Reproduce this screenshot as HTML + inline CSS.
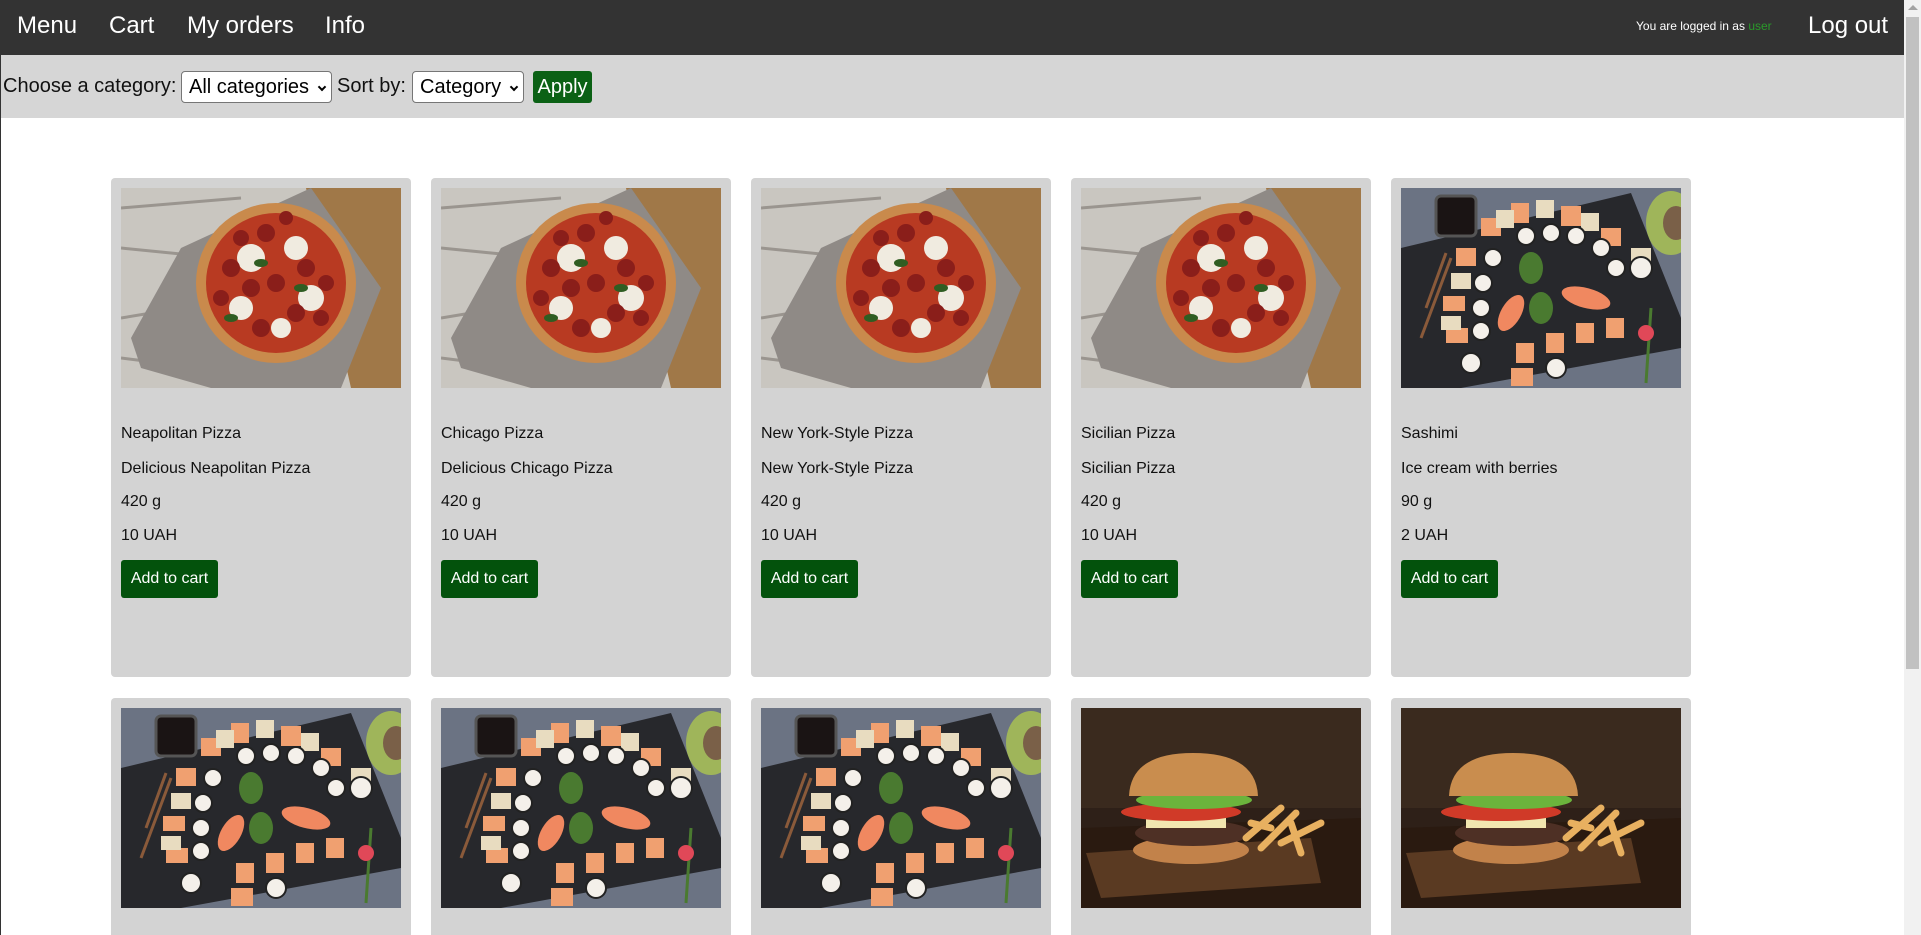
<!DOCTYPE html>
<html><head><meta charset="utf-8"><style>
*{box-sizing:border-box}
html,body{margin:0;padding:0;width:1921px;height:935px;overflow:hidden;background:#fff;font-family:"Liberation Sans",Arial,sans-serif;position:relative}
.nav{position:absolute;left:0;top:0;width:1904px;height:55px;background:#333}
.nav a{position:absolute;top:12px;color:#fff;font-size:24px;text-decoration:none;line-height:28px}
.login{position:absolute;left:1636px;top:19px;color:#fff;font-size:12px}
.login span{color:#2a9a2a}
.filter{position:absolute;left:0;top:55px;width:1904px;height:63px;background:#d6d6d6;border-left:1px solid #333}
.leftline{position:absolute;left:0;top:118px;width:1px;height:817px;background:#333}
.filter .t{position:absolute;top:19px;font-size:20px;color:#111;line-height:24px}
.sel{position:absolute;top:16px;height:32px;background:#fff;border:1px solid #767676;border-radius:4px;font-size:20px;line-height:30px;padding-left:7px;color:#000}
.sel i{position:absolute;right:6px;top:12px;width:6px;height:6px;border-right:2px solid #000;border-bottom:2px solid #000;transform:rotate(45deg)}
.apply{position:absolute;left:532px;top:16px;width:59px;height:32px;background:#0b6115;color:#fff;font-size:20px;border-radius:3px;text-align:center;line-height:32px}
.scroll{position:absolute;left:1904px;top:0;width:17px;height:935px;background:#f1f1f1}
.scroll .th{position:absolute;left:2px;top:17px;width:13px;height:652px;background:#c1c1c1}
.scroll .up{position:absolute;left:4px;top:5px;border-left:5px solid transparent;border-right:5px solid transparent;border-bottom:5px solid #a3a3a3}
.card{position:absolute;width:300px;height:499px;background:#d3d3d3;border-radius:4px}
.card.r2{height:237px;border-radius:4px 4px 0 0}
.card svg{position:absolute;left:10px;top:10px;width:280px;height:200px;display:block}
.card p{position:absolute;left:10px;margin:0;font-size:16px;color:#111;line-height:18px}
.btn{position:absolute;left:10px;top:382px;width:97px;height:38px;background:#03520c;color:#fff;border-radius:3px;font-size:16px;line-height:38px;text-align:center}
</style></head><body>
<svg width="0" height="0" style="position:absolute">
<defs>
<symbol id="pizza" viewBox="0 0 280 200">
<rect width="280" height="200" fill="#c9c6c0"/>
<path d="M0 20 L120 10 M0 60 L100 70 M0 130 L60 120 M0 170 L80 180" stroke="#6d6660" stroke-width="3" opacity=".5"/>
<path d="M185 0 L280 0 L280 200 L230 200 Z" fill="#a07848"/>
<path d="M60 60 L190 0 L260 100 L220 200 L90 200 L20 180 L10 150 Z" fill="#8f8a86"/>
<circle cx="155" cy="95" r="80" fill="#c98a4c"/>
<circle cx="155" cy="95" r="70" fill="#b83a22"/>
<g fill="#f0ebe0"><circle cx="130" cy="70" r="14"/><circle cx="175" cy="60" r="12"/><circle cx="190" cy="110" r="13"/><circle cx="120" cy="120" r="12"/><circle cx="160" cy="140" r="10"/></g>
<g fill="#8a1e1a"><circle cx="110" cy="80" r="9"/><circle cx="145" cy="45" r="9"/><circle cx="185" cy="80" r="9"/><circle cx="155" cy="95" r="9"/><circle cx="130" cy="100" r="9"/><circle cx="175" cy="125" r="9"/><circle cx="140" cy="140" r="9"/><circle cx="205" cy="95" r="8"/><circle cx="100" cy="110" r="8"/><circle cx="120" cy="50" r="8"/><circle cx="200" cy="130" r="8"/><circle cx="165" cy="30" r="7"/></g>
<g fill="#2f5d22"><ellipse cx="140" cy="75" rx="7" ry="4"/><ellipse cx="180" cy="100" rx="7" ry="4"/><ellipse cx="110" cy="130" rx="7" ry="4"/></g>
</symbol>
<symbol id="sushi" viewBox="0 0 280 200">
<rect width="280" height="200" fill="#6b7383"/>
<path d="M0 60 L230 5 L280 130 L280 160 L60 200 L0 200 Z" fill="#27282c"/>
<rect x="35" y="8" width="40" height="40" rx="5" fill="#1a1414" stroke="#555" stroke-width="3"/>
<ellipse cx="270" cy="35" rx="25" ry="32" fill="#9fb55a"/><ellipse cx="275" cy="35" rx="13" ry="17" fill="#7a6048"/>
<path d="M25 120 L45 65 M20 150 L50 70" stroke="#8a5a3a" stroke-width="3"/>
<g fill="#f0a070"><rect x="80" y="30" width="20" height="18"/><rect x="110" y="15" width="18" height="20"/><rect x="160" y="18" width="20" height="20"/><rect x="200" y="40" width="20" height="18"/><rect x="55" y="60" width="20" height="18"/><rect x="42" y="108" width="22" height="15"/><rect x="45" y="140" width="22" height="15"/><rect x="115" y="155" width="18" height="20"/><rect x="145" y="145" width="18" height="20"/><rect x="175" y="135" width="18" height="20"/><rect x="205" y="130" width="18" height="20"/><rect x="110" y="180" width="22" height="18"/></g>
<g fill="#e8dcc0"><rect x="95" y="22" width="18" height="18"/><rect x="135" y="12" width="18" height="18"/><rect x="180" y="25" width="18" height="18"/><rect x="50" y="85" width="20" height="16"/><rect x="40" y="128" width="20" height="14"/><rect x="230" y="60" width="20" height="18"/></g>
<g fill="#f4f0ea" stroke="#222" stroke-width="2"><circle cx="125" cy="48" r="9"/><circle cx="150" cy="45" r="9"/><circle cx="175" cy="48" r="9"/><circle cx="200" cy="60" r="9"/><circle cx="92" cy="70" r="9"/><circle cx="82" cy="95" r="9"/><circle cx="80" cy="120" r="9"/><circle cx="80" cy="143" r="9"/><circle cx="215" cy="80" r="9"/><circle cx="240" cy="80" r="11"/><circle cx="70" cy="175" r="10"/><circle cx="155" cy="180" r="10"/></g>
<g fill="#f08860"><ellipse cx="110" cy="125" rx="10" ry="20" transform="rotate(30 110 125)"/><ellipse cx="185" cy="110" rx="25" ry="10" transform="rotate(15 185 110)"/></g>
<g fill="#4a7a30"><ellipse cx="130" cy="80" rx="12" ry="16"/><ellipse cx="140" cy="120" rx="12" ry="16"/></g>
<path d="M245 195 L250 120" stroke="#4a7a30" stroke-width="3"/><circle cx="245" cy="145" r="8" fill="#e04858"/>
</symbol>
<symbol id="burger" viewBox="0 0 280 200">
<rect width="280" height="200" fill="#2e2018"/>
<rect y="0" width="280" height="100" fill="#3a2a1e"/>
<path d="M0 120 L280 110 L280 200 L0 200 Z" fill="#2a1a10"/>
<path d="M5 145 L230 130 L240 175 L20 190 Z" fill="#5a3a22"/>
<ellipse cx="110" cy="142" rx="58" ry="14" fill="#c2824a"/>
<ellipse cx="112" cy="125" rx="58" ry="13" fill="#4e3025"/>
<rect x="65" y="108" width="80" height="12" fill="#f2e6b0"/>
<ellipse cx="100" cy="104" rx="60" ry="9" fill="#d03a28"/>
<ellipse cx="113" cy="92" rx="58" ry="9" fill="#6bb43c"/>
<path d="M48 88 Q50 45 112 45 Q175 45 177 88 Z" fill="#c98d4e"/>
<g stroke="#e8b060" stroke-width="7" stroke-linecap="round"><path d="M165 130 L200 100"/><path d="M180 140 L215 105"/><path d="M200 135 L240 115"/><path d="M170 115 L190 120"/><path d="M220 145 L210 115"/></g>
</symbol>
</defs></svg>

<div class="nav">
<a style="left:17px">Menu</a><a style="left:109px">Cart</a><a style="left:187px">My orders</a><a style="left:325px">Info</a>
<div class="login">You are logged in as <span>user</span></div>
<a style="left:1808px">Log out</a>
</div>
<div class="filter">
<div class="t" style="left:2px">Choose a category:</div>
<div class="sel" style="left:180px;width:151px">All categories<i></i></div>
<div class="t" style="left:336px">Sort by:</div>
<div class="sel" style="left:411px;width:112px">Category<i></i></div>
<div class="apply">Apply</div>
</div>
<div class="leftline"></div>

<div class="card" style="left:111px;top:178px"><svg><use href="#pizza"/></svg><p style="top:247px">Neapolitan Pizza</p><p style="top:282px">Delicious Neapolitan Pizza</p><p style="top:315px">420 g</p><p style="top:349px">10 UAH</p><div class="btn">Add to cart</div></div>
<div class="card" style="left:431px;top:178px"><svg><use href="#pizza"/></svg><p style="top:247px">Chicago Pizza</p><p style="top:282px">Delicious Chicago Pizza</p><p style="top:315px">420 g</p><p style="top:349px">10 UAH</p><div class="btn">Add to cart</div></div>
<div class="card" style="left:751px;top:178px"><svg><use href="#pizza"/></svg><p style="top:247px">New York-Style Pizza</p><p style="top:282px">New York-Style Pizza</p><p style="top:315px">420 g</p><p style="top:349px">10 UAH</p><div class="btn">Add to cart</div></div>
<div class="card" style="left:1071px;top:178px"><svg><use href="#pizza"/></svg><p style="top:247px">Sicilian Pizza</p><p style="top:282px">Sicilian Pizza</p><p style="top:315px">420 g</p><p style="top:349px">10 UAH</p><div class="btn">Add to cart</div></div>
<div class="card" style="left:1391px;top:178px"><svg><use href="#sushi"/></svg><p style="top:247px">Sashimi</p><p style="top:282px">Ice cream with berries</p><p style="top:315px">90 g</p><p style="top:349px">2 UAH</p><div class="btn">Add to cart</div></div>

<div class="card r2" style="left:111px;top:698px"><svg><use href="#sushi"/></svg></div>
<div class="card r2" style="left:431px;top:698px"><svg><use href="#sushi"/></svg></div>
<div class="card r2" style="left:751px;top:698px"><svg><use href="#sushi"/></svg></div>
<div class="card r2" style="left:1071px;top:698px"><svg><use href="#burger"/></svg></div>
<div class="card r2" style="left:1391px;top:698px"><svg><use href="#burger"/></svg></div>

<div class="scroll"><div class="up"></div><div class="th"></div></div>
</body></html>
